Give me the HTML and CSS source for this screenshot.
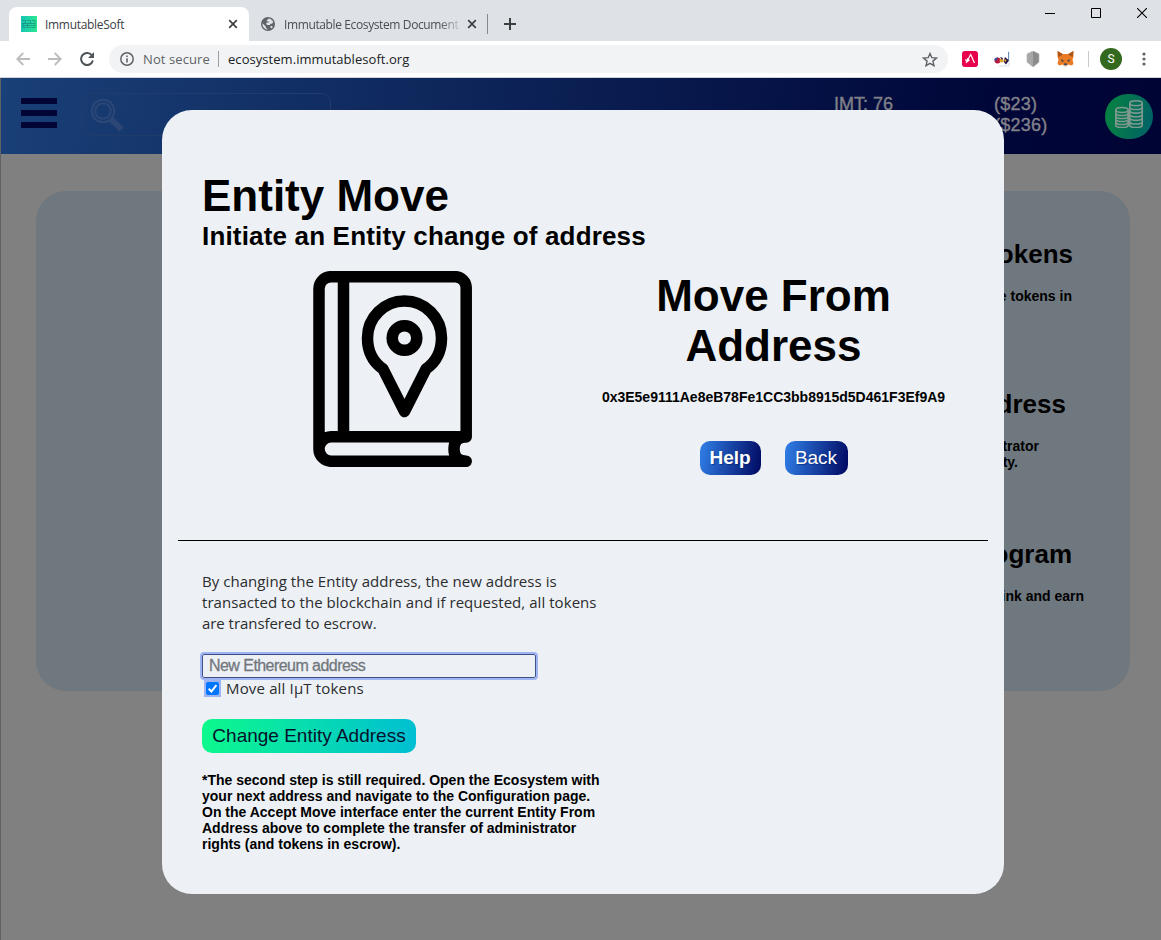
FILE: index.html
```html
<!DOCTYPE html>
<html lang="en">
<head>
<meta charset="utf-8">
<title>ImmutableSoft</title>
<link rel="stylesheet" href="styles.css">
</head>
<body>
<div class="window">
  <div class="tabstrip">
    <div class="tab tab-active">
      <svg class="favicon" width="16" height="16" viewBox="0 0 16 16"><defs><linearGradient id="fav"><stop offset="0" stop-color="#17c4b4"/><stop offset="1" stop-color="#2be892"/></linearGradient></defs><path fill="url(#fav)" d="M0 0h16v16H0z"/><g fill="none" stroke="#158e82" stroke-width=".7"><path d="M1 4.500h3.500v3H2v4h3M6 4.500h3.500v3H6.500v4h3.500M11 4.500h3v7h-3.500M1 7.500h13M1 9.500h13"/></g></svg>
      <span class="tab-title title-a">ImmutableSoft</span>
      <svg class="x" width="10" height="10" viewBox="0 0 10 10"><path d="M1.200 1.200l7.600 7.600M8.800 1.200L1.200 8.800" stroke="#3c4043" stroke-width="1.700"/></svg>
    </div>
    <div class="tab tab-idle">
      <svg class="globe" width="14" height="14" viewBox="0 0 14 14"><circle cx="7" cy="7" r="7" fill="#5f6368"/><path fill="#dee1e6" d="M1.500 6.200l3.300 3.300v1.200l1.600 1.200v.8A5.700 5.700 0 0 1 1.500 6.200zM7.700 1.400c2 .2 3.900 1.600 4.600 3.600l-1.200 1.700H9.600L8.900 8H6.200L5 6.700l1-1.100h1.600V4.300H5.200l1.200-1.500zM9.500 9h1.800l.3 1.300-1.300 1.100-.8-.9z"/></svg>
      <span class="tab-title title-b">Immutable Ecosystem Document</span>
      <svg class="x" width="10" height="10" viewBox="0 0 10 10"><path d="M1.200 1.200l7.600 7.600M8.800 1.200L1.200 8.800" stroke="#3c4043" stroke-width="1.700"/></svg>
    </div>
    <div class="tab-sep"></div>
    <svg class="plus" width="12" height="12" viewBox="0 0 12 12"><path d="M6 0v12M0 6h12" stroke="#3c4043" stroke-width="2"/></svg>
    <div class="window-buttons">
      <svg width="10" height="10" viewBox="0 0 10 10"><path d="M0 5.500h10" stroke="#000"/></svg>
      <svg width="10" height="10" viewBox="0 0 10 10"><path d="M.5.5h9v9h-9z" fill="none" stroke="#000"/></svg>
      <svg width="10" height="10" viewBox="0 0 10 10"><path d="M0 0l10 10M10 0L0 10" stroke="#000" stroke-width="1.100"/></svg>
    </div>
  </div>
  <div class="toolbar">
    <svg class="back" width="14" height="14" viewBox="0 0 14 14"><path d="M14 7H1.500M7.300 1L1.300 7l6 6" fill="none" stroke="#babcbe" stroke-width="1.800"/></svg>
    <svg class="forward" width="14" height="14" viewBox="0 0 14 14"><path d="M0 7h12.500M6.700 1l6 6-6 6" fill="none" stroke="#babcbe" stroke-width="1.800"/></svg>
    <svg class="reload" width="14" height="14" viewBox="0 0 14 14"><path d="M12 3.500A6 6 0 1 0 12.900 8.500" fill="none" stroke="#50555a" stroke-width="2"/><path d="M14 0v6H8z" fill="#50555a"/></svg>
    <div class="omnibox">
      <svg width="14" height="14" viewBox="0 0 14 14"><circle cx="7" cy="7" r="6.200" fill="none" stroke="#5f6368" stroke-width="1.500"/><path d="M6.200 6.200h1.600v4.300H6.200zM6.200 3.500h1.600V5H6.200z" fill="#5f6368"/></svg>
      <span class="insecure">Not secure</span>
      <span class="omni-sep"></span>
      <span class="url">ecosystem.immutablesoft.org</span>
      <svg class="star" width="16" height="15" viewBox="0 0 16 15"><path d="M8 1.500l1.800 4.200 4.700.4-3.600 3 1.100 4.600L8 11.300l-4 2.400 1.100-4.600-3.600-3 4.700-.4z" fill="none" stroke="#5f6368" stroke-width="1.400"/></svg>
    </div>
    <svg class="ext-a" width="16" height="16" viewBox="0 0 16 16"><rect width="16" height="16" rx="3" fill="#e8004c"/><path d="M4 12L8.700 3.500 12.500 12M3 9.200h4.500M5 7.500l2 1.700-2.500 2" fill="none" stroke="#fff" stroke-width="1.200"/></svg>
    <svg class="ext-b" width="16" height="16" viewBox="0 0 16 16"><path d="M5 15h10V0" fill="none" stroke="#d5dfe9"/><path d="M14.500 1v8" stroke="#6a91b8"/><circle cx="3.500" cy="9.500" r="3" fill="#b31942"/><path d="M0 8l4-2-2 4z" fill="#2457a0"/><circle cx="7.500" cy="9.500" r="2" fill="#e5a824"/><path d="M6 6l3 1-1 2zM11 6l4 3.500-3 4-2.500-3z" fill="#25134b"/><path d="M10 9l1.500-1 1 2-1.500 1z" fill="#e5a824"/></svg>
    <svg class="ext-c" width="14" height="16" viewBox="0 0 14 16"><path d="M7 0l6 3v8l-6 5-6-5V3z" fill="#a7a7a7"/><path d="M7 0l6 3v8l-6 5z" fill="#8b8b8b"/><path d="M1 3l6-3 6 3v8l-6 5-6-5z" fill="none" stroke="#b5b5b5" stroke-width=".7"/></svg>
    <svg class="ext-d" width="17" height="16" viewBox="0 0 17 16"><path d="M.5 0L6 3h5l5.500-3v5.500L15.500 9l1 3.500-1.500 2-4-1-1 1.500H7l-1-1.500-4 1-1.500-2 1-3.500L.5 5.500z" fill="#e87b24"/><path d="M.5 0L6 3.500 1.500 6zM16.500 0L11 3.500 15.500 6z" fill="#a8531a"/><path d="M4 8l3 2-2 .8zM13 8l-3 2 2 .8zM7 12.500h3l-.5 2h-2z" fill="#243c54"/><path d="M6.500 14h4l-1 1.500h-2z" fill="#c8b8ab"/></svg>
    <span class="bar-sep"></span>
    <span class="avatar">S</span>
    <svg class="dots" width="4" height="14" viewBox="0 0 4 14"><g fill="#5f6368"><circle cx="2" cy="2" r="1.600"/><circle cx="2" cy="7" r="1.600"/><circle cx="2" cy="12" r="1.600"/></g></svg>
  </div>
  <div class="page">
    <header class="app-header">
      <div class="menu"><i></i><i></i><i></i></div>
      <div class="search">
        <svg width="34" height="34" viewBox="0 0 34 34"><g fill="none" stroke="#2c4776" stroke-width="2"><circle cx="13" cy="13" r="11.200"/><circle cx="13" cy="13" r="7.800"/><path d="M19.500 22.500L29.500 32l2.700-2.700-10-9.500M21 21l9.500 9.500"/></g></svg>
      </div>
      <div class="balance"><span>IMT: 76</span><span>ETH: 1.16</span></div>
      <div class="values"><span>($23)</span><span>($236)</span></div>
      <div class="coins">
        <svg width="28" height="28" viewBox="0 0 28 28"><g fill="none" stroke="#80998f" stroke-width="1.600"><ellipse cx="7" cy="10" rx="6.200" ry="2.500"/><path d="M.8 10v15c0 3.400 12.400 3.400 12.400 0V10M.8 13c0 3.400 12.400 3.400 12.400 0M.8 16c0 3.400 12.400 3.400 12.400 0M.8 19c0 3.400 12.400 3.400 12.400 0M.8 22c0 3.400 12.400 3.400 12.400 0"/><ellipse cx="21" cy="3.300" rx="6.200" ry="2.500"/><path d="M14.800 3.300V25c0 3.400 12.400 3.400 12.400 0V3.300M14.800 7c0 3.400 12.400 3.400 12.400 0M14.800 10.600c0 3.400 12.400 3.400 12.400 0M14.800 14.200c0 3.400 12.400 3.400 12.400 0M14.800 17.800c0 3.400 12.400 3.400 12.400 0M14.800 21.400c0 3.400 12.400 3.400 12.400 0"/></g></svg>
      </div>
    </header>
    <main class="panel">
      <section class="card"><h3 class="h-tokens">Tokens</h3><p class="p-tokens">Move tokens in</p></section>
      <section class="card"><h3 class="h-address">Address</h3><p class="p-address">administrator<br><span>entity.</span></p></section>
      <section class="card"><h3 class="h-program">Program</h3><p class="p-program">link and earn</p></section>
    </main>
    <div class="dialog">
      <div class="dialog-top">
        <h1>Entity Move</h1>
        <h2>Initiate an Entity change of address</h2>
        <div class="summary">
          <div class="art">
            <svg width="160" height="196" viewBox="0 0 160 196"><g fill="none" stroke="#000" stroke-width="11.500" stroke-linejoin="round" stroke-linecap="round"><path d="M153.200 166V17A11 11 0 0 0 142 5.700H18A12 12 0 0 0 6 17.700V178A12.300 12.300 0 0 0 18 190.300H153.200M6 178A12.300 12.300 0 0 1 18 165.700H153.200Q141 166 141 178T153.200 190.300"/><path d="M30.500 6v159" stroke-linecap="butt"/><path d="M91.500 140.500L70 98C60 91 54.500 80 54.500 67a37 37 0 0 1 74 0c0 13-5.500 24-15.500 31z"/><circle cx="91.500" cy="67" r="12.300"/></g></svg>
          </div>
          <div class="source">
            <h1>Move From Address</h1>
            <p>0x3E5e9111Ae8eB78Fe1CC3bb8915d5D461F3Ef9A9</p>
            <div class="actions"><button class="help">Help</button><button class="goback">Back</button></div>
          </div>
        </div>
      </div>
      <div class="dialog-form">
        <div class="intro"><span class="line">By changing the Entity address, the new address is</span><span class="line">transacted to the blockchain and if requested, all tokens</span><span class="line last">are transfered to escrow.</span></div>
        <input class="address" type="text" placeholder="New Ethereum address">
        <label class="move-all"><span class="check"><svg width="13" height="13" viewBox="0 0 13 13"><rect width="13" height="13" rx="2" fill="#0075ff"/><path d="M2.700 6.800l2.700 2.700 5-6.300" fill="none" stroke="#fff" stroke-width="2"/></svg></span><span class="move-text">Move all IµT tokens</span></label>
        <button class="change">Change Entity Address</button>
        <p class="note">*The second step is still required. Open the Ecosystem with<br>your next address and navigate to the Configuration page.<br>On the Accept Move interface enter the current Entity From<br>Address above to complete the transfer of administrator<br>rights (and tokens in escrow).</p>
      </div>
    </div>
  </div>
</div>
</body>
</html>
```
FILE: styles.css
```css
* { box-sizing: border-box; }
body { margin: 0; font-family: "Liberation Sans", Arial, sans-serif; color: #000; }
svg { display: block; flex: none; }
h1, h2, h3, p { margin: 0; }
button { font-family: inherit; border: 0; padding: 0; }
.window { width: 1161px; height: 940px; overflow: hidden; background: #dee1e6; }

.tabstrip { height: 41px; display: flex; align-items: flex-start; background: #dee1e6; padding-left: 9px; }
.tab { display: flex; align-items: center; height: 34px; margin-top: 7px; }
.tab-active { width: 240px; background: #fff; border-radius: 8px 8px 0 0; padding-left: 12px; }
.tab-idle { width: 238px; padding-left: 12px; }
.tab-title { font-family: "Open Sans", "Noto Sans", sans-serif; font-size: 12px; color: #3c4043; white-space: nowrap; }
.title-a { width: 182px; margin-left: 8px; letter-spacing: -0.3px; }
.title-b { width: 175px; margin-left: 9px; letter-spacing: -0.38px; -webkit-mask-image: linear-gradient(90deg, #000 155px, #0003 175px); mask-image: linear-gradient(90deg, #000 155px, #0003 175px); color: #4a4e53; }
.tab .x { margin-left: 8px; }
.tab-active .x { margin-left: 1px; }
.tab-sep { width: 1px; height: 20px; background: #85888d; margin-top: 14px; }
.plus { margin: 18px 0 0 16px; }
.window-buttons { display: flex; gap: 36px; margin: 8px 14px 0 auto; }

.toolbar { height: 37px; display: flex; align-items: center; background: #fff; border-bottom: 1px solid #d0d2d8; padding-left: 16px; }
.forward { margin-left: 18px; }
.reload { margin-left: 18px; }
.omnibox { display: flex; align-items: center; width: 839px; height: 28px; border-radius: 14px; background: #f1f3f4; margin-left: 15px; padding: 0 10px 0 11px; font-family: "Open Sans", "Noto Sans", sans-serif; font-size: 13px; white-space: nowrap; }
.insecure { width: 67px; margin-left: 9px; color: #5f6368; letter-spacing: .1px; }
.omni-sep { width: 1px; height: 16px; background: #9aa0a6; margin: 0 9px 0 8px; }
.url { color: #202124; letter-spacing: .05px; }
.star { margin-left: auto; }
.ext-a { margin-left: 14px; }
.ext-b { margin-left: 16px; }
.ext-c { margin-left: 16px; }
.ext-d { margin-left: 17px; }
.bar-sep { width: 1px; height: 16px; background: #c8cace; margin-left: 14px; }
.avatar { width: 22px; height: 22px; border-radius: 50%; background: #33691e; color: #fff; font: 12px/22px Roboto, sans-serif; text-align: center; margin-left: 11px; }
.dots { margin-left: 20px; }

.page { position: relative; height: 862px; background: #808080; border-left: 1px solid #606264; }
.app-header { height: 76px; display: flex; align-items: flex-start; background: linear-gradient(100deg, #194077 0%, #000638 85%, #000435 100%); }
.menu { display: grid; gap: 6px; margin: 20px 0 0 20px; }
.menu i { width: 36px; height: 6px; background: #000535; }
.search { width: 249px; height: 43px; margin: 15px 0 0 25px; border: 1px solid #203c6b; border-radius: 10px; padding: 4px 7px; }
.balance, .values { display: flex; flex-direction: column; margin-top: 16px; font-size: 18px; line-height: 21px; color: #808188; -webkit-text-stroke: .4px #808188; white-space: nowrap; }
.balance { margin-left: 503px; width: 160px; }
.values { width: 111px; letter-spacing: .25px; }
.coins { width: 48px; height: 45px; border-radius: 24px; margin-top: 16px; padding: 6px 10px; background: linear-gradient(100deg, #07833f, #006068); }

.panel { width: 1094px; height: 500px; margin: 37px 0 0 35px; border-radius: 30px; background: #70787f; padding: 48px 0 0 800px; }
.card { height: 150px; white-space: nowrap; }
.card h3 { font-size: 26px; line-height: 30px; text-align: right; }
.card p { font-size: 14px; line-height: 16px; margin-top: 19px; text-align: right; font-weight: bold; }
.card .h-tokens { margin-right: 57px; }
.card .h-address { margin-right: 64px; }
.card .h-program { margin-right: 58px; }
.card .p-tokens { margin-right: 58px; }
.card .p-address { margin-right: 91px; }
.p-address span { margin-right: 21px; }
.card .p-program { margin-right: 46px; }

.dialog { position: absolute; left: 161px; top: 32px; width: 842px; height: 784px; border-radius: 30px; background: #edf1f5; padding: 61px 16px 0; }
.dialog-top { height: 370px; border-bottom: 1px solid #000; padding: 0 24px; }
.dialog h1 { font-size: 44px; line-height: 50px; white-space: nowrap; }
.dialog h2 { font-size: 26px; line-height: 30px; letter-spacing: .17px; white-space: nowrap; }
.summary { display: grid; grid-template-columns: 1fr 1fr; }
.art { padding: 20px 0 0 110.500px; }
.source { display: flex; flex-direction: column; align-items: center; margin-top: 20px; }
.dialog .source h1 { width: 300px; white-space: normal; text-align: center; }
.source p { font-size: 14px; line-height: 16px; font-weight: bold; margin-top: 18px; }
.actions { display: flex; gap: 24px; margin-top: 36px; }
.actions button { height: 34px; border-radius: 10px; background: linear-gradient(100deg, #307fe8, #000860); color: #fff; font-size: 19px; text-shadow: 1px 1px 1px #00186080; }
.actions .help { width: 61px; font-weight: bold; }
.actions .goback { width: 63px; }
.dialog-form { display: flex; flex-direction: column; align-items: flex-start; padding: 30px 24px 0; }
.intro, .move-text { font-family: "Open Sans", "Noto Sans", sans-serif; font-size: 15px; line-height: 21px; color: #2b2c2e; white-space: nowrap; }
.line { display: block; letter-spacing: .05px; }
.last { letter-spacing: -.05px; }
.address { width: 334px; height: 24px; margin-top: 20px; padding: 1px 6px; border: 1px solid #414f87; border-radius: 2px; outline: 2px solid #9fb4f2; background: #edf1f5; font: 16px "Liberation Sans", sans-serif; letter-spacing: -.55px; }
.address::placeholder { color: #73777d; -webkit-text-stroke: .3px #73777d; }
.move-all { display: flex; align-items: center; height: 21px; }
.check { padding: 2px; margin-left: 2px; background: #9fb4f2; }
.move-text { margin-left: 5px; letter-spacing: .16px; }
.change { width: 214px; height: 34px; margin-top: 20px; border-radius: 10px; background: linear-gradient(100deg, #0df98c, #00bed4); color: #04112b; font-size: 19px; }
.note { margin-top: 19px; font-size: 14px; line-height: 16px; font-weight: bold; white-space: nowrap; }
```
